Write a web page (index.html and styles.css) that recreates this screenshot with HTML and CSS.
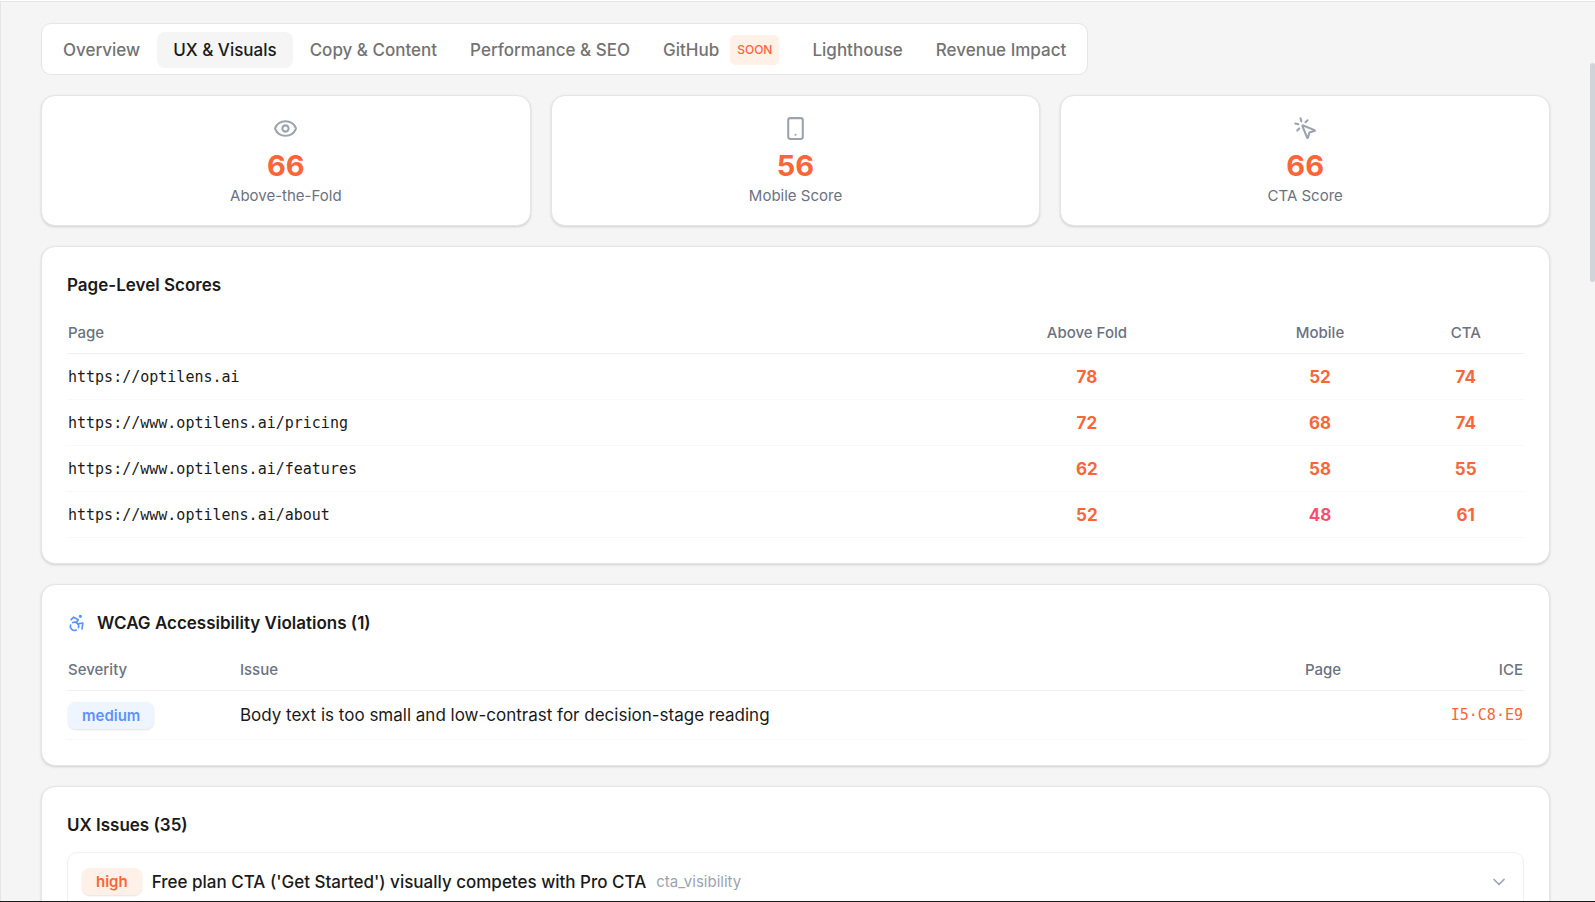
FILE: index.html
```html
<!DOCTYPE html>
<html lang="en">
<head>
    <meta charset="UTF-8">
    <meta name="viewport" content="width=device-width, initial-scale=1.0">
    <title>UX &amp; Visuals</title>
    <link rel="stylesheet" href="styles.css">
</head>
<body>
    <main class="content">
        <nav class="tabs">
            <button class="tab">Overview</button>
            <button class="tab active">UX &amp; Visuals</button>
            <button class="tab">Copy &amp; Content</button>
            <button class="tab">Performance &amp; SEO</button>
            <button class="tab">GitHub <span class="soon">SOON</span></button>
            <button class="tab">Lighthouse</button>
            <button class="tab">Revenue Impact</button>
        </nav>

        <section class="scores">
            <div class="card score">
                <svg class="icon" viewBox="0 0 24 24"><path d="M2.06 12.35a1 1 0 0 1 0-.7 10.75 10.75 0 0 1 19.88 0 1 1 0 0 1 0 .7 10.75 10.75 0 0 1-19.88 0"/><circle cx="12" cy="12" r="3"/></svg>
                <div class="score-value">66</div>
                <div class="score-label">Above-the-Fold</div>
            </div>
            <div class="card score">
                <svg class="icon" viewBox="0 0 24 24"><rect x="5" y="2" width="14" height="20" rx="2"/><path d="M12 18h.01"/></svg>
                <div class="score-value">56</div>
                <div class="score-label">Mobile Score</div>
            </div>
            <div class="card score">
                <svg class="icon" viewBox="0 0 24 24"><path d="M14 4.1 12 6"/><path d="m5.1 8-2.9-.8"/><path d="m6 12-1.9 2"/><path d="M7.2 2.2 8 5.1"/><path d="M9.04 9.69a.5.5 0 0 1 .65-.65l11 4.5a.5.5 0 0 1-.07.95l-4.35 1.04a1 1 0 0 0-.74.74l-1.04 4.35a.5.5 0 0 1-.95.07z"/></svg>
                <div class="score-value">66</div>
                <div class="score-label">CTA Score</div>
            </div>
        </section>

        <section class="card panel">
            <h2>Page-Level Scores</h2>
            <table class="page-table">
                <thead>
                    <tr>
                        <th class="col-url">Page</th>
                        <th class="col-fold">Above Fold</th>
                        <th class="col-mobile">Mobile</th>
                        <th class="col-cta">CTA</th>
                    </tr>
                </thead>
                <tbody>
                    <tr><td>https://optilens.ai</td><td>78</td><td>52</td><td>74</td></tr>
                    <tr><td>https://www.optilens.ai/pricing</td><td>72</td><td>68</td><td>74</td></tr>
                    <tr><td>https://www.optilens.ai/features</td><td>62</td><td>58</td><td>55</td></tr>
                    <tr><td>https://www.optilens.ai/about</td><td>52</td><td class="bad">48</td><td>61</td></tr>
                </tbody>
            </table>
        </section>

        <section class="card panel">
            <h2><svg class="icon icon-a11y" viewBox="0 0 24 24"><circle cx="16" cy="4" r="1"/><path d="m18 19 1-7-6 1"/><path d="m5 8 3-3 5.5 3-2.36 3.5"/><path d="M4.24 14.5a5 5 0 0 0 6.88 6"/><path d="M13.76 17.5a5 5 0 0 0-6.88-6"/></svg>WCAG Accessibility Violations (1)</h2>
            <table class="wcag-table">
                <thead>
                    <tr>
                        <th class="col-severity">Severity</th>
                        <th class="col-issue">Issue</th>
                        <th class="col-page">Page</th>
                        <th class="col-ice">ICE</th>
                    </tr>
                </thead>
                <tbody>
                    <tr>
                        <td><span class="badge medium">medium</span></td>
                        <td>Body text is too small and low-contrast for decision-stage reading</td>
                        <td></td>
                        <td class="ice">I5·C8·E9</td>
                    </tr>
                </tbody>
            </table>
        </section>

        <section class="card panel">
            <h2>UX Issues (35)</h2>
            <button class="issue">
                <span class="badge high">high</span>
                <span class="issue-title">Free plan CTA ('Get Started') visually competes with Pro CTA</span>
                <span class="issue-tag">cta_visibility</span>
                <svg class="icon icon-chevron" viewBox="0 0 24 24"><path d="m6 9 6 6 6-6"/></svg>
            </button>
        </section>
    </main>
    <div class="scroll-thumb"></div>
</body>
</html>
```

FILE: styles.css
```css
* {
    box-sizing: border-box;
}
body {
    margin: 0;
    height: 100vh;
    overflow: hidden;
    position: relative;
    background-color: #ffffff;
    color: #1a1a1a;
    font-family: Inter, "Liberation Sans", sans-serif;
    font-size: 17px;
    padding-top: 1px;
    border-bottom: 1px solid #1a1a1a;
}
button {
    font: inherit;
    color: inherit;
    background: none;
    border: none;
    cursor: pointer;
}
.content {
    display: flex;
    flex-direction: column;
    align-items: stretch;
    gap: 20px;
    height: 100%;
    overflow: hidden;
    padding: 21px 45px 0 40px;
    background-color: #f5f5f5;
    border-top: 1px solid #e5e5e5;
    border-left: 1px solid #e5e5e5;
}
.content > * {
    flex-shrink: 0;
}
.icon {
    width: 25px;
    height: 25px;
    fill: none;
    stroke: #9ca3af;
    stroke-width: 2;
    stroke-linecap: round;
    stroke-linejoin: round;
}

/* Tabs */
.tabs {
    display: flex;
    align-items: center;
    align-self: flex-start;
    gap: 1px;
    padding: 8px 5px 6px;
    background-color: #ffffff;
    border: 1px solid #e5e5e5;
    border-radius: 10px;
}
.tab {
    display: flex;
    align-items: center;
    gap: 11px;
    height: 36px;
    padding: 0 16px;
    border-radius: 8px;
    color: #737373;
    font-weight: 500;
    white-space: nowrap;
}
.tab.active {
    background-color: #f5f5f5;
    color: #1a1a1a;
}
.soon {
    padding: 0 7px;
    border-radius: 5px;
    background-color: #fff0e8;
    color: #fb6538;
    font-size: 12px;
    font-weight: 500;
    line-height: 30px;
}

/* Cards */
.card {
    background-color: #ffffff;
    border: 1px solid #e5e5e5;
    border-radius: 14px;
    box-shadow: 0 1px 3px rgba(0, 0, 0, 0.1), 0 1px 2px rgba(0, 0, 0, 0.06);
}
.scores {
    display: grid;
    grid-template-columns: repeat(3, 1fr);
    gap: 20px;
}
.score {
    display: flex;
    flex-direction: column;
    align-items: center;
    padding: 20px 20px 17px;
}
.score-value {
    margin-top: 7px;
    color: #fb6538;
    font-size: 29px;
    font-weight: 700;
    line-height: 36px;
}
.score-label {
    color: #6b7280;
    font-size: 15px;
    line-height: 24px;
}
.panel {
    padding: 25px;
}
h2 {
    display: flex;
    align-items: center;
    gap: 10px;
    margin: 0 0 14px;
    font-size: 17px;
    font-weight: 600;
    line-height: 26px;
}

/* Tables */
table {
    width: 100%;
    border-collapse: collapse;
    table-layout: fixed;
}
th,
td {
    padding: 0 1px;
    text-align: left;
}
th {
    height: 41px;
    color: #6b7280;
    font-size: 15px;
    font-weight: 500;
    border-bottom: 1px solid #f0f0f0;
}
td {
    border-bottom: 1px solid #f8f8f8;
}
.page-table td {
    height: 46px;
    padding-top: 2px;
    color: #fb6538;
    font-weight: 700;
}
.page-table td:first-child {
    color: #1a1a1a;
    font-family: "DejaVu Sans Mono", monospace;
    font-size: 15px;
    font-weight: 400;
}
.page-table th:not(:first-child),
.page-table td:not(:first-child) {
    text-align: center;
}
.page-table .bad {
    color: #ff4d6d;
}
.col-url {
    width: 60%;
}
.col-fold {
    width: 20%;
}
.col-mobile {
    width: 12%;
}
.col-cta {
    width: 8%;
}
.wcag-table td {
    height: 49px;
}
.col-severity {
    width: 11.8%;
}
.col-issue {
    width: 73.1%;
}
.col-page {
    width: 7%;
}
.wcag-table .col-ice,
.wcag-table .ice {
    text-align: right;
}
.ice {
    color: #fb6538;
    font-family: "DejaVu Sans Mono", monospace;
    font-size: 15px;
}
.icon-a11y {
    width: 20px;
    height: 20px;
    stroke: #5b93ff;
}

/* Badges and issues */
.badge {
    display: inline-block;
    padding: 0 14px;
    border-radius: 8px;
    font-size: 15px;
    font-weight: 600;
    line-height: 27px;
    box-shadow: 0 1px 2px rgba(0, 0, 0, 0.12);
}
.badge.medium {
    background-color: #eff5ff;
    color: #5b93ff;
}
.badge.high {
    background-color: #fff0e8;
    color: #fb6538;
}
.issue {
    display: flex;
    align-items: center;
    gap: 10px;
    width: 100%;
    padding: 15px 14px;
    border: 1px solid #f0f0f0;
    border-radius: 10px;
    text-align: left;
}
.issue-title {
    font-weight: 500;
}
.issue-tag {
    color: #9ca3af;
    font-size: 15px;
}
.icon-chevron {
    width: 20px;
    height: 20px;
    margin-left: auto;
}

.scroll-thumb {
    position: absolute;
    top: 63px;
    right: 0;
    width: 5px;
    height: 219px;
    border-radius: 3px;
    background-color: #d1d5db;
}
```
